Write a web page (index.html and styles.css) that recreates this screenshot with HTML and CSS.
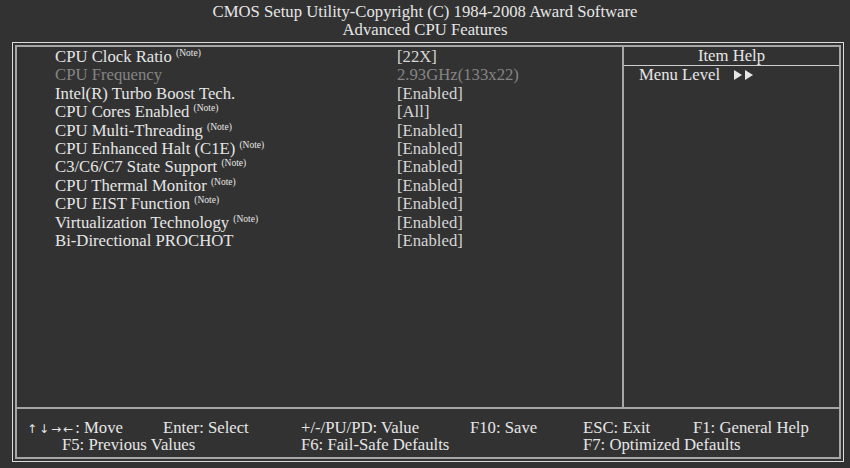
FILE: index.html
```html
<!DOCTYPE html>
<html lang="en">
<head>
  <meta charset="UTF-8">
  <title>Advanced CPU Features</title>
  <link rel="stylesheet" href="styles.css">
</head>
<body>
  <div class="title">
    <div>CMOS Setup Utility-Copyright (C) 1984-2008 Award Software</div>
    <div>Advanced CPU Features</div>
  </div>

  <div class="frame">
    <div class="inner">
      <div class="main">
        <div class="settings">
          <div class="row"><span class="label">CPU Clock Ratio <sup>(Note)</sup></span><span class="value">[22X]</span></div>
          <div class="row off"><span class="label">CPU Frequency</span><span class="value">2.93GHz(133x22)</span></div>
          <div class="row"><span class="label">Intel(R) Turbo Boost Tech.</span><span class="value">[Enabled]</span></div>
          <div class="row"><span class="label">CPU Cores Enabled <sup>(Note)</sup></span><span class="value">[All]</span></div>
          <div class="row"><span class="label">CPU Multi-Threading <sup>(Note)</sup></span><span class="value">[Enabled]</span></div>
          <div class="row"><span class="label">CPU Enhanced Halt (C1E) <sup>(Note)</sup></span><span class="value">[Enabled]</span></div>
          <div class="row"><span class="label">C3/C6/C7 State Support <sup>(Note)</sup></span><span class="value">[Enabled]</span></div>
          <div class="row"><span class="label">CPU Thermal Monitor <sup>(Note)</sup></span><span class="value">[Enabled]</span></div>
          <div class="row"><span class="label">CPU EIST Function <sup>(Note)</sup></span><span class="value">[Enabled]</span></div>
          <div class="row"><span class="label">Virtualization Technology <sup>(Note)</sup></span><span class="value">[Enabled]</span></div>
          <div class="row"><span class="label">Bi-Directional PROCHOT</span><span class="value">[Enabled]</span></div>
        </div>

        <div class="help">
          <div class="help-head">Item Help</div>
          <div class="help-body">
            Menu Level
            <svg class="level" width="22" height="10" viewBox="0 0 22 10">
              <polygon points="0,0 8,5 0,10" fill="#e6e6e6"/>
              <polygon points="11,0 19,5 11,10" fill="#e6e6e6"/>
            </svg>
          </div>
        </div>
      </div>

      <div class="footer">
        <span><span class="arrows">↑↓→←</span>: Move</span>
        <span>Enter: Select</span>
        <span>+/-/PU/PD: Value</span>
        <span>F10: Save</span>
        <span>ESC: Exit</span>
        <span>F1: General Help</span>

        <span class="indent">F5: Previous Values</span>
        <span></span>
        <span class="wide">F6: Fail-Safe Defaults</span>
        <span class="wide">F7: Optimized Defaults</span>
      </div>
    </div>
  </div>
</body>
</html>
```

FILE: styles.css
```css
html, body {
  margin: 0;
  padding: 0;
}

body {
  width: 850px;
  height: 468px;
  background-color: #323232;
  color: #e6e6e6;
  font-family: "Liberation Serif", "Times New Roman", serif;
  font-size: 16.7px;
  overflow: hidden;
}

.title {
  height: 42px;
  box-sizing: border-box;
  padding-top: 3px;
  text-align: center;
  line-height: 18px;
}

.frame {
  margin-left: 12px;
  width: 832px;
  height: 420px;
  box-sizing: border-box;
  border: 1px solid #dcdcdc;
  padding: 2px;
}

.inner {
  height: 100%;
  box-sizing: border-box;
  border: 2px solid #a6a6a6;
  display: flex;
  flex-direction: column;
}

.main {
  height: 360px;
  display: flex;
}

.settings {
  flex: 1;
  padding: 1px 0 0 38px;
}

.row {
  display: flex;
  line-height: 18.4px;
  height: 18.4px;
  white-space: nowrap;
}

.label {
  width: 342px;
}

.value {
  color: #d6d6d6;
}

.row.off .label,
.row.off .value {
  color: #858585;
}

sup {
  font-size: 9.5px;
  vertical-align: 6px;
  line-height: 0;
}

.help {
  width: 215px;
  border-left: 2px solid #a6a6a6;
}

.help-head {
  height: 18px;
  line-height: 18px;
  text-align: center;
  border-bottom: 1px solid #cfcfcf;
}

.help-body {
  padding: 0 0 0 15px;
  line-height: 18px;
  display: flex;
  align-items: center;
}

.level {
  margin-left: 14px;
}

/* linha de atalhos */
.footer {
  flex: 1;
  border-top: 2px solid #a6a6a6;
  padding: 10px 0 0 9px;
  display: grid;
  grid-template-columns: 137px 138px 169px 113px 110px 1fr;
  grid-auto-rows: 17px;
  line-height: 17px;
  white-space: nowrap;
}

.arrows {
  font-family: "DejaVu Sans", sans-serif;
  font-size: 12px;
  letter-spacing: 2px;
  margin-left: 1px;
}

.indent {
  padding-left: 36px;
  grid-column: 1 / 2;
}

.wide {
  grid-column: span 2;
}

.footer .wide:last-child {
  grid-column: 5 / 7;
}
```
